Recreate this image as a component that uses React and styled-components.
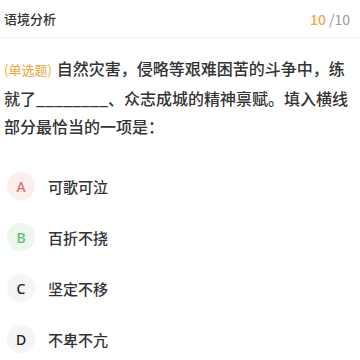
import React from "react";
import styled, { createGlobalStyle } from "styled-components";

const GlobalStyle = createGlobalStyle`
  body {
    margin: 0;
    background: #fff;
    font-family: "Noto Sans CJK SC", "Noto Sans", sans-serif;
  }
`;

const Page = styled.div`
  width: 360px;
  height: 360px;
  overflow: hidden;
  background: #fff;
`;

const Header = styled.div`
  display: flex;
  justify-content: space-between;
  align-items: center;
  height: 37px;
  padding: 0 10px 0 4px;
  border-bottom: 1px solid #f3f3f3;
`;

const Title = styled.div`
  font-size: 13px;
  font-weight: 500;
  color: #333;
`;

const Counter = styled.div`
  font-size: 14px;
  color: #999;
`;

const Current = styled.span`
  color: #f5a34a;
  font-weight: 500;
  margin-right: 3px;
`;

const Question = styled.div`
  padding: 16px 8px 0 4px;
  font-size: 16px;
  font-weight: 500;
  line-height: 28px;
  color: #333;
`;

const Tag = styled.span`
  font-size: 13px;
  font-weight: 400;
  color: #f0a63a;
  margin-right: 5px;
`;

const Options = styled.div`
  display: flex;
  flex-direction: column;
  gap: 23px;
  padding: 32px 0 0 7px;
`;

const Option = styled.div`
  display: flex;
  align-items: center;
  gap: 13px;
  height: 28px;
`;

const Badge = styled.div`
  width: 28px;
  height: 28px;
  border-radius: 50%;
  display: flex;
  align-items: center;
  justify-content: center;
  font-family: "Noto Sans", sans-serif;
  font-size: 14px;
  font-weight: 500;
  background: ${(p) => p.$bg};
  color: ${(p) => p.$fg};
`;

const OptionText = styled.div`
  font-size: 15px;
  font-weight: 500;
  color: #333;
`;

const options = [
  { key: "A", text: "可歌可泣", bg: "#fdeeee", fg: "#e46a6a" },
  { key: "B", text: "百折不挠", bg: "#ebf7ec", fg: "#5fbf72" },
  { key: "C", text: "坚定不移", bg: "#f5f5f5", fg: "#222" },
  { key: "D", text: "不卑不亢", bg: "#f5f5f5", fg: "#222" },
];

export default function App() {
  return (
    <Page>
      <GlobalStyle />
      <Header>
        <Title>语境分析</Title>
        <Counter>
          <Current>10</Current>/10
        </Counter>
      </Header>
      <Question>
        <Tag>(单选题)</Tag>自然灾害，侵略等艰难困苦的斗争中，练就了________、众志成城的精神禀赋。填入横线部分最恰当的一项是：
      </Question>
      <Options>
        {options.map((o) => (
          <Option key={o.key}>
            <Badge $bg={o.bg} $fg={o.fg}>
              {o.key}
            </Badge>
            <OptionText>{o.text}</OptionText>
          </Option>
        ))}
      </Options>
    </Page>
  );
}
